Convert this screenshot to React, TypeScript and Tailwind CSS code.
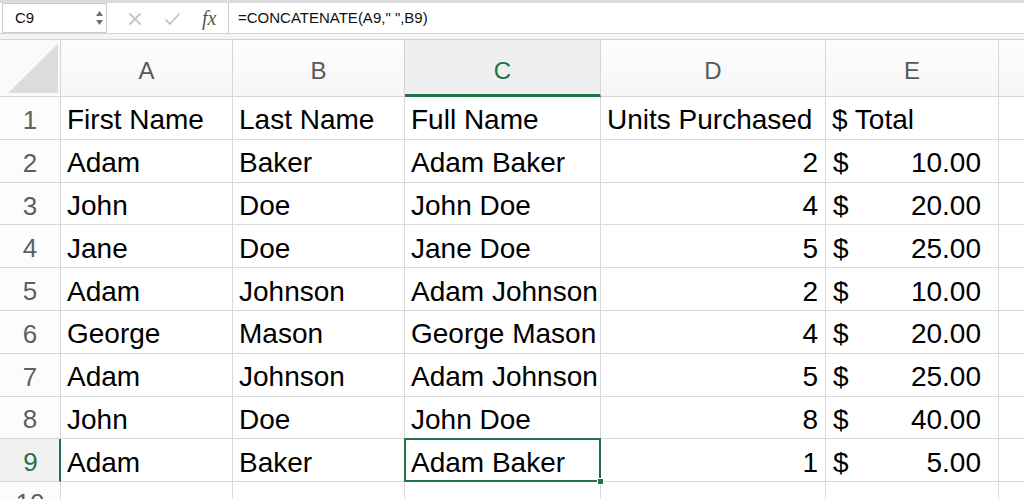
const cols = ["A", "B", "C", "D", "E"];

const data: [string, string, string, string, string][] = [
  ["First Name", "Last Name", "Full Name", "Units Purchased", "$ Total"],
  ["Adam", "Baker", "Adam Baker", "2", "10.00"],
  ["John", "Doe", "John Doe", "4", "20.00"],
  ["Jane", "Doe", "Jane Doe", "5", "25.00"],
  ["Adam", "Johnson", "Adam Johnson", "2", "10.00"],
  ["George", "Mason", "George Mason", "4", "20.00"],
  ["Adam", "Johnson", "Adam Johnson", "5", "25.00"],
  ["John", "Doe", "John Doe", "8", "40.00"],
  ["Adam", "Baker", "Adam Baker", "1", "5.00"],
];

const FormulaBar = () => (
  <div className="h-[40px] flex flex-col border-t-[3px] border-[#dcdcdc] bg-white">
    <div className="flex h-[30px]">
      {/* Name box */}
      <div className="ml-[2px] w-[105px] border border-[#cdcdcd] flex items-center justify-between pl-[12px] pr-[2px]">
        <span className="text-[15px] text-[#111]">C9</span>
        <svg width="9" height="20" viewBox="0 0 9 20">
          <path d="M4.5 3 L8 8 L1 8 Z" fill="#6e6e6e" />
          <path d="M4.5 17 L8 12 L1 12 Z" fill="#6e6e6e" />
        </svg>
      </div>
      {/* Cancel / confirm / fx */}
      <div className="w-[121px] flex items-center pl-[21px]">
        <svg width="14" height="14" viewBox="0 0 14 14" className="mt-[2px]">
          <path d="M1.5 1.5 L12.5 12.5 M12.5 1.5 L1.5 12.5" stroke="#c4c4c4" strokeWidth="1.8" />
        </svg>
        <svg width="17" height="14" viewBox="0 0 17 14" className="ml-[22px] mt-[2px]">
          <path d="M1.5 7.5 L6 12 L15.5 1.5" stroke="#c4c4c4" strokeWidth="1.8" fill="none" />
        </svg>
        <span className="ml-[21px] text-[20px] italic text-[#555] leading-none [font-family:'Liberation_Serif',serif]">
          fx
        </span>
      </div>
      {/* Formula */}
      <div className="flex-1 border-l border-[#cdcdcd] flex items-center pl-[9px]">
        <span className="text-[15px] text-[#111]">=CONCATENATE(A9," ",B9)</span>
      </div>
    </div>
    <div className="h-[7px] border-t border-b border-[#d2d2d2] bg-[#f4f4f4]" />
  </div>
);

const Corner = () => (
  <div className="border-r border-b border-[#d6d6d6] bg-[#fafafa] flex items-end justify-end pr-[2px] pb-[3px]">
    <svg width="50" height="49" viewBox="0 0 50 49">
      <path d="M0 49 L50 49 L50 0 Z" fill="#dcdcdc" />
    </svg>
  </div>
);

export default function App() {
  return (
    <div className="h-screen w-full overflow-hidden bg-white text-black [font-family:'Liberation_Sans',Arial,sans-serif]">
      <FormulaBar />
      <div className="grid grid-cols-[61px_172px_172px_196px_225px_173px_1fr] grid-rows-[57px_repeat(10,42.8px)]">
        <Corner />
        {cols.map((c) => (
          <div
            key={c}
            className={
              c === "C"
                ? "border-r border-b-[3px] border-r-[#d6d6d6] border-b-[#217346] bg-[#efefef] flex items-center justify-center pt-[7px] text-[24px] text-[#217346]"
                : "border-r border-b border-[#d6d6d6] bg-gradient-to-b from-[#fdfdfd] to-[#f6f6f6] flex items-center justify-center pt-[6px] text-[24px] text-[#595959]"
            }
          >
            {c}
          </div>
        ))}
        <div className="border-b border-[#d6d6d6] bg-gradient-to-b from-[#fdfdfd] to-[#f6f6f6]" />

        {data.map((row, i) => {
          const n = i + 1;
          const active = n === 9;
          return [
            <div
              key={`h${n}`}
              className={
                active
                  ? "border-r-2 border-b border-r-[#217346] border-b-[#d6d6d6] bg-[#f1f1f1] flex items-center justify-center pt-[5px] pl-[2px] text-[26px] text-[#217346]"
                  : "border-r border-b border-[#d6d6d6] bg-[#fcfcfc] flex items-center justify-center pt-[5px] text-[26px] text-[#5f5f5f]"
              }
            >
              {n}
            </div>,
            <div key={`a${n}`} className="border-r border-b border-[#dadada] flex items-center pl-[6px] pt-[5px] text-[28px] whitespace-nowrap">
              {row[0]}
            </div>,
            <div key={`b${n}`} className="border-r border-b border-[#dadada] flex items-center pl-[6px] pt-[5px] text-[28px] whitespace-nowrap">
              {row[1]}
            </div>,
            <div key={`c${n}`} className="relative border-r border-b border-[#dadada] flex items-center pl-[6px] pt-[5px] text-[28px] whitespace-nowrap">
              {row[2]}
              {active && (
                <>
                  <div className="absolute -left-px -top-px -right-px -bottom-px border-2 border-[#217346]" />
                  <div className="absolute -right-[4px] -bottom-[4px] w-[7px] h-[7px] bg-[#217346] border border-white" />
                </>
              )}
            </div>,
            <div
              key={`d${n}`}
              className={
                n === 1
                  ? "border-r border-b border-[#dadada] flex items-center pl-[6px] pt-[5px] text-[28px] whitespace-nowrap"
                  : "border-r border-b border-[#dadada] flex items-center justify-end pr-[7px] pt-[5px] text-[28px] whitespace-nowrap"
              }
            >
              {row[3]}
            </div>,
            n === 1 ? (
              <div key={`e${n}`} className="border-r border-b border-[#dadada] flex items-center pl-[6px] pt-[5px] text-[28px] whitespace-nowrap">
                {row[4]}
              </div>
            ) : (
              <div key={`e${n}`} className="border-r border-b border-[#dadada] flex items-center justify-between pl-[7px] pr-[17px] pt-[5px] text-[28px] whitespace-nowrap">
                <span>$</span>
                <span>{row[4]}</span>
              </div>
            ),
            <div key={`f${n}`} className="border-b border-[#dadada]" />,
          ];
        })}

        {/* row 10, cut off by the window */}
        <div className="border-r border-[#d6d6d6] bg-[#fcfcfc] flex items-start justify-center pt-[6px] text-[26px] leading-[30px] text-[#5f5f5f]">
          10
        </div>
        <div className="border-r border-[#dadada]" />
        <div className="border-r border-[#dadada]" />
        <div className="border-r border-[#dadada]" />
        <div className="border-r border-[#dadada]" />
        <div className="border-r border-[#dadada]" />
        <div />
      </div>
    </div>
  );
}
